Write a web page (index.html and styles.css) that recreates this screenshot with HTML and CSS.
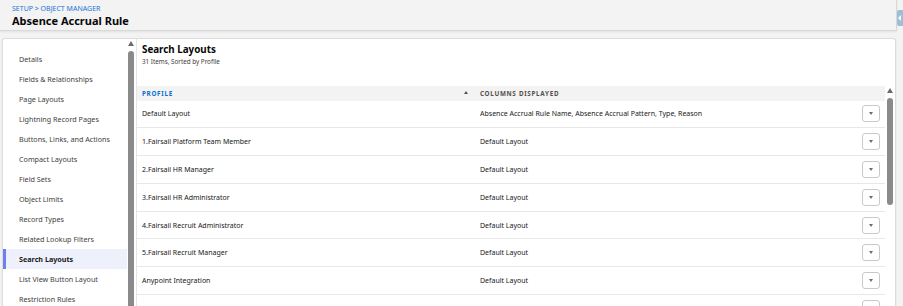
FILE: index.html
```html
<!DOCTYPE html>
<html lang="en">
<head>
  <meta charset="UTF-8" />
  <title>Absence Accrual Rule - Search Layouts</title>
  <link rel="stylesheet" href="styles.css">
</head>
<body>
  <div class="page-header">
    <div class="breadcrumb">SETUP &gt; OBJECT MANAGER</div>
    <h1>Absence Accrual Rule</h1>
  </div>
  <div class="side-tab"><span class="tab-arrow"></span></div>

  <div class="main">
    <ul class="sidebar">
      <li>Details</li>
      <li>Fields &amp; Relationships</li>
      <li>Page Layouts</li>
      <li>Lightning Record Pages</li>
      <li>Buttons, Links, and Actions</li>
      <li>Compact Layouts</li>
      <li>Field Sets</li>
      <li>Object Limits</li>
      <li>Record Types</li>
      <li>Related Lookup Filters</li>
      <li class="active">Search Layouts</li>
      <li>List View Button Layout</li>
      <li>Restriction Rules</li>
    </ul>
    <div class="scrollbar side-scroll">
      <span class="scroll-up"></span>
      <span class="thumb"></span>
    </div>

    <div class="content">
      <h2>Search Layouts</h2>
      <div class="subtitle">31 Items, Sorted by Profile</div>

      <div class="table-wrap">
        <div class="table">
          <div class="row head">
            <div class="col-profile">PROFILE <span class="sort-arrow"></span></div>
            <div class="col-columns">COLUMNS DISPLAYED</div>
            <div class="col-action"></div>
          </div>
          <div class="row">
            <div class="col-profile">Default Layout</div>
            <div class="col-columns">Absence Accrual Rule Name, Absence Accrual Pattern, Type, Reason</div>
            <div class="col-action"><button class="menu-btn"></button></div>
          </div>
          <div class="row">
            <div class="col-profile">1.Fairsail Platform Team Member</div>
            <div class="col-columns">Default Layout</div>
            <div class="col-action"><button class="menu-btn"></button></div>
          </div>
          <div class="row">
            <div class="col-profile">2.Fairsail HR Manager</div>
            <div class="col-columns">Default Layout</div>
            <div class="col-action"><button class="menu-btn"></button></div>
          </div>
          <div class="row">
            <div class="col-profile">3.Fairsail HR Administrator</div>
            <div class="col-columns">Default Layout</div>
            <div class="col-action"><button class="menu-btn"></button></div>
          </div>
          <div class="row">
            <div class="col-profile">4.Fairsail Recruit Administrator</div>
            <div class="col-columns">Default Layout</div>
            <div class="col-action"><button class="menu-btn"></button></div>
          </div>
          <div class="row">
            <div class="col-profile">5.Fairsail Recruit Manager</div>
            <div class="col-columns">Default Layout</div>
            <div class="col-action"><button class="menu-btn"></button></div>
          </div>
          <div class="row">
            <div class="col-profile">Anypoint Integration</div>
            <div class="col-columns">Default Layout</div>
            <div class="col-action"><button class="menu-btn"></button></div>
          </div>
          <div class="row">
            <div class="col-profile">Chatter External User</div>
            <div class="col-columns">Default Layout</div>
            <div class="col-action"><button class="menu-btn"></button></div>
          </div>
        </div>
        <div class="scrollbar table-scroll">
          <span class="scroll-up"></span>
          <span class="thumb"></span>
        </div>
      </div>
    </div>
  </div>
</body>
</html>
```

FILE: styles.css
```css
body {
  font-family: 'Noto Sans', 'Open Sans', sans-serif;
  background: #f3f3f3;
  margin: 0;
  height: 306px;
  overflow: hidden;
  color: #181818;
}

.page-header {
  width: 897px;
  height: 31px;
  padding: 4px 0 0 12px;
  box-sizing: border-box;
  background: #f3f3f3;
  border-right: 1px solid #d9d9d9;
  border-bottom: 1px solid #d9d9d9;
  box-shadow: 0 1px 2px rgba(0,0,0,0.08);
}
.breadcrumb {
  font-size: 7px;
  line-height: 9px;
  color: #1b74d4;
}
h1 {
  margin: 0;
  font-size: 11px;
  line-height: 15px;
  font-weight: 700;
  color: #080707;
}

.side-tab {
  position: absolute;
  top: 10px;
  left: 897px;
  width: 6px;
  height: 16px;
  background: #9dbfd5;
  border-radius: 2px 0 0 2px;
}
.tab-arrow {
  position: absolute;
  top: 5px;
  left: 1px;
  border-right: 3px solid #fff;
  border-top: 3px solid transparent;
  border-bottom: 3px solid transparent;
}

.main {
  margin: 7px 7px 0 2px;
  height: 267px;
  overflow: hidden;
  background: #fff;
  border: 1px solid #dcdcdc;
  border-bottom: none;
  border-radius: 3px 3px 0 0;
  display: flex;
  box-shadow: 0 1px 2px rgba(0,0,0,0.08);
}

.sidebar {
  list-style: none;
  margin: 0;
  padding: 10px 0 0;
  width: 124px;
  flex-shrink: 0;
}
.sidebar li {
  height: 20px;
  line-height: 20px;
  padding-left: 13px;
  font-size: 7.2px;
  color: #3e3e3c;
  border-left: 3px solid transparent;
}
.sidebar li.active {
  background: #eef0fb;
  border-left-color: #6f7ef0;
  font-weight: 700;
  color: #181818;
}

.scrollbar {
  position: relative;
  width: 9px;
  flex-shrink: 0;
}
.scroll-up {
  position: absolute;
  left: 1px;
  border-bottom: 5px solid #6b6b6b;
  border-left: 3.5px solid transparent;
  border-right: 3.5px solid transparent;
}
.thumb {
  position: absolute;
  left: 1px;
  width: 6px;
  background: #8a8a8a;
  border-radius: 3px;
}
.side-scroll {
  border-right: 1px solid #e5e5e5;
}
.side-scroll .scroll-up { top: 2px; }
.side-scroll .thumb { top: 12px; bottom: -4px; }

.content {
  flex: 1;
  padding-top: 4px;
  min-width: 0;
}
h2 {
  margin: 0 0 0 5px;
  font-size: 9.8px;
  line-height: 14px;
  font-weight: 700;
  color: #080707;
}
.subtitle {
  margin-left: 5px;
  font-size: 6.3px;
  line-height: 9px;
  color: #3e3e3c;
}

.table-wrap {
  display: flex;
  margin-top: 20px;
}
.table {
  flex: 1;
}
.row {
  display: flex;
  align-items: center;
  height: 27.8px;
  border-bottom: 1px solid #e8e8e8;
  box-sizing: border-box;
  font-size: 7px;
  color: #181818;
}
.row.head {
  height: 14.5px;
  background: #f3f3f3;
  border-bottom: none;
  font-size: 6.3px;
  font-weight: 700;
  letter-spacing: 0.7px;
  color: #514f4d;
}
.col-profile {
  width: 333px;
  padding-left: 5px;
  position: relative;
}
.head .col-profile {
  color: #0b6fcf;
}
.sort-arrow {
  position: absolute;
  right: 7px;
  top: 2px;
  border-bottom: 3px solid #514f4d;
  border-left: 2px solid transparent;
  border-right: 2px solid transparent;
}
.col-columns {
  flex: 1;
  padding-left: 5px;
}
.col-action {
  width: 18px;
  padding-right: 5px;
}
.menu-btn {
  display: block;
  width: 18px;
  height: 17px;
  padding: 0;
  background: #fff;
  border: 1px solid #c9c9c9;
  border-radius: 3px;
  position: relative;
}
.menu-btn::after {
  content: '';
  position: absolute;
  left: 6px;
  top: 6px;
  border-top: 3px solid #706e6b;
  border-left: 2.5px solid transparent;
  border-right: 2.5px solid transparent;
}

.table-scroll {
  margin-left: 1px;
}
.table-scroll .scroll-up { top: 2px; }
.table-scroll .thumb { top: 12px; height: 107px; }
```
